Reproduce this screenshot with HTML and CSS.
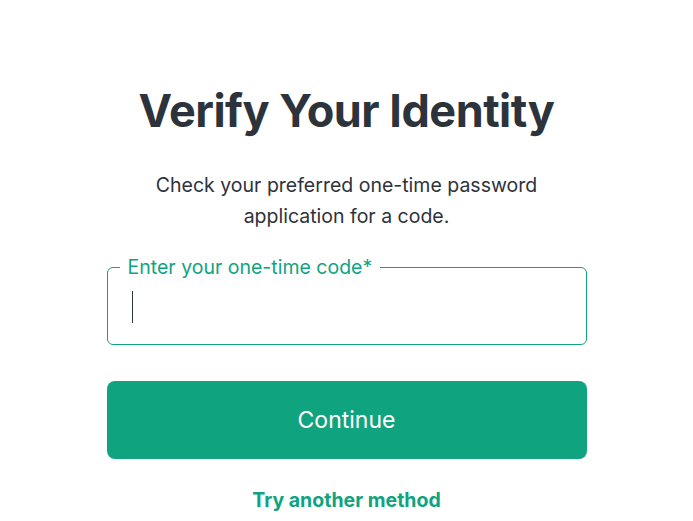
FILE: index.html
```html
<!DOCTYPE html>
<html lang="en">
<head>
    <meta charset="UTF-8">
    <meta name="viewport" content="width=device-width, initial-scale=1.0">
    <title>Verify Your Identity</title>
    <link rel="stylesheet" href="styles.css">
</head>
<body>
    <div class="container">
        <h1>Verify Your Identity</h1>
        <p class="hint">Check your preferred one-time password application for a code.</p>

        <form id="otpForm">
            <fieldset class="code-field">
                <legend>Enter your one-time code*</legend>
                <div class="code-row">
                    <span class="caret"></span>
                    <input type="text" id="otpCode" name="code" inputmode="numeric" autocomplete="one-time-code">
                </div>
            </fieldset>

            <button type="submit" class="continue-btn">Continue</button>
        </form>

        <a href="#" class="alt-link">Try another method</a>
    </div>
</body>
</html>
```

FILE: styles.css
```css
body {
    font-family: Inter, "Noto Sans", sans-serif;
    background-color: #ffffff;
    color: #2d333a;
    margin: 0;
    padding: 0;
}

.container {
    width: 480px;
    margin: 0 auto;
    padding-top: 83px;
    display: flex;
    flex-direction: column;
    align-items: center;
}

h1 {
    margin: 0;
    font-size: 45px;
    font-weight: 700;
    letter-spacing: -0.5px;
    color: #2d333a;
}

.hint {
    width: 420px;
    margin: 32px 0 0;
    font-size: 19.5px;
    line-height: 31px;
    text-align: center;
}

form {
    width: 100%;
    margin-top: 25px;
}

/* outlined field, the legend sits in the top border */
.code-field {
    margin: 0;
    padding: 0 24px 8px;
    border: 1px solid #10a37f;
    border-radius: 6px;
}

.code-field legend {
    margin-left: -12px;
    padding: 0 8px;
    font-size: 19.5px;
    line-height: 21px;
    color: #10a37f;
}

.code-row {
    height: 58px;
    display: flex;
    align-items: center;
}

.code-row input {
    flex: 1;
    border: none;
    outline: none;
    font-size: 18px;
    background: transparent;
}

.caret {
    width: 1px;
    height: 32px;
    background-color: #2d333a;
}

.continue-btn {
    display: block;
    width: 100%;
    height: 78px;
    margin-top: 36px;
    background-color: #10a37f;
    color: #ffffff;
    border: none;
    border-radius: 8px;
    font-family: inherit;
    font-size: 23px;
    cursor: pointer;
}

.alt-link {
    margin-top: 29px;
    font-size: 19.5px;
    font-weight: 700;
    color: #10a37f;
    text-decoration: none;
}
```
